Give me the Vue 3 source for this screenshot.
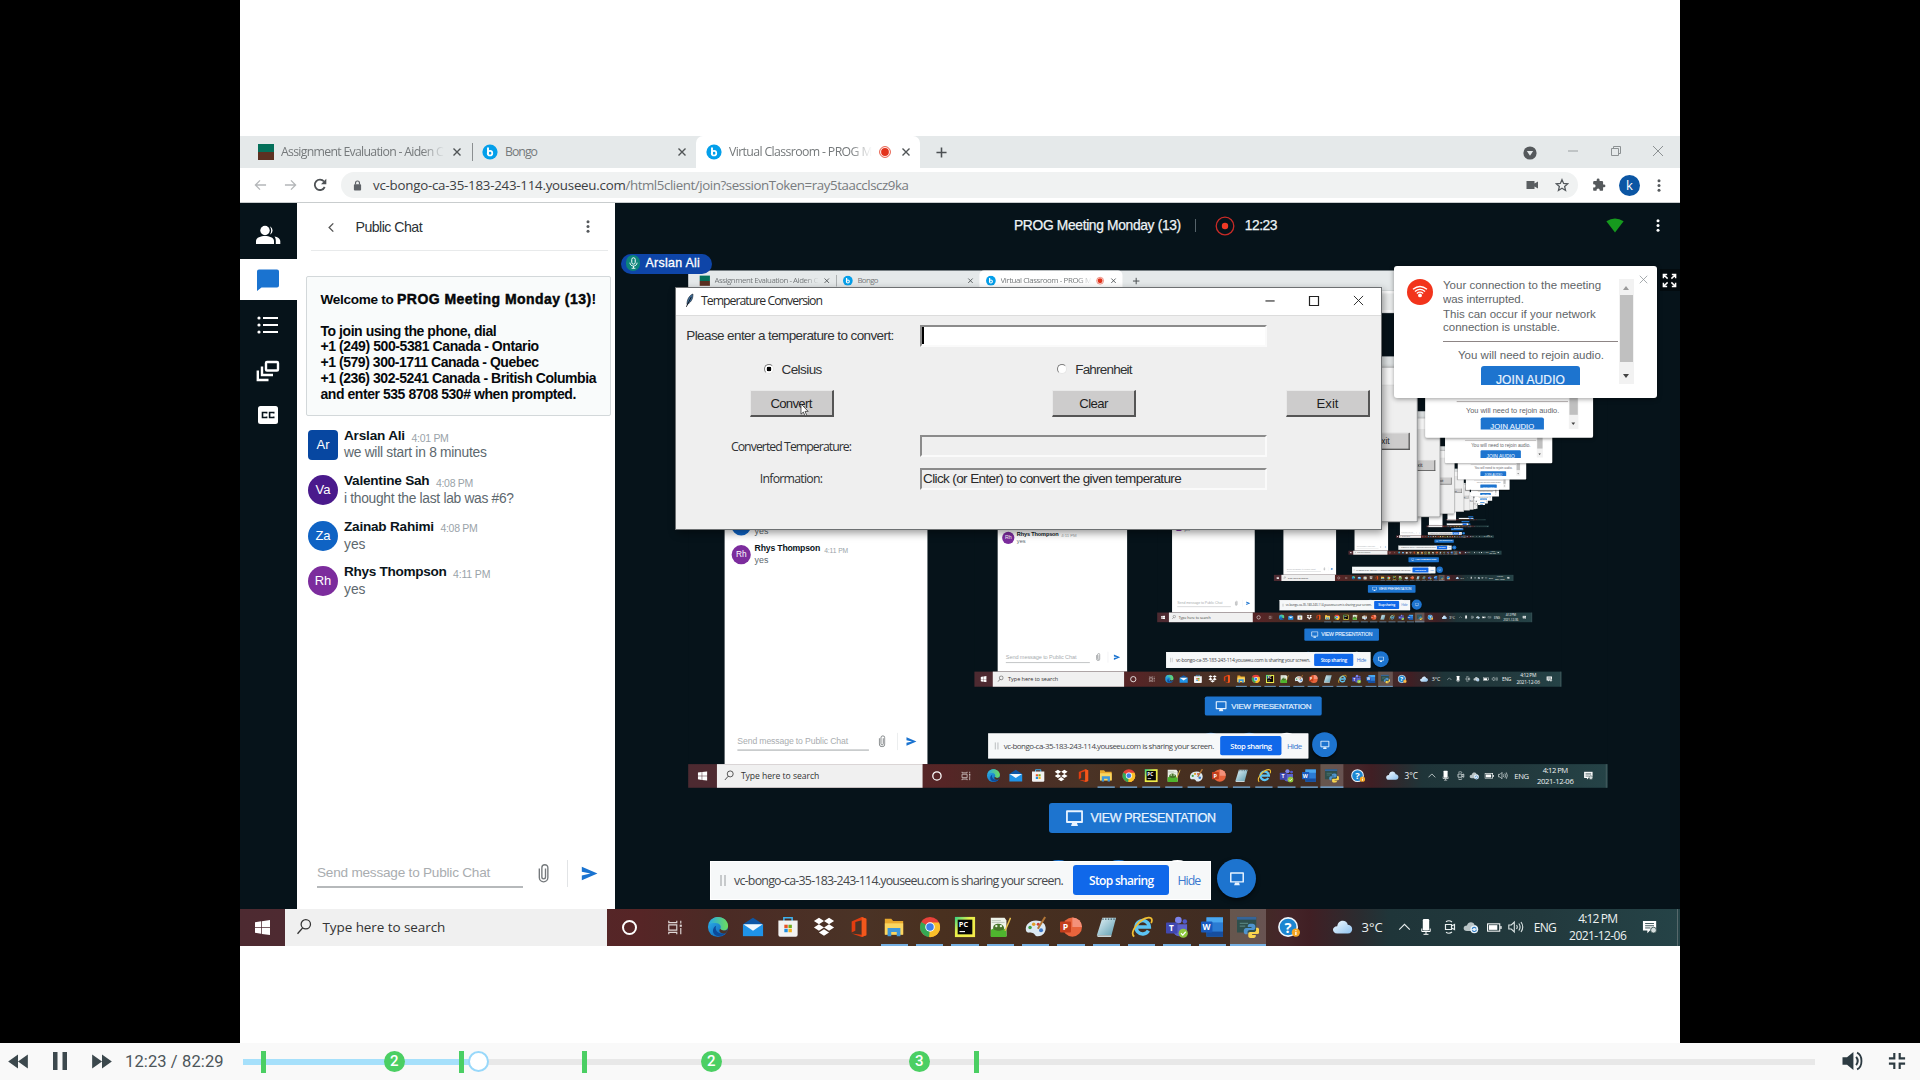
<script setup>
const SCALE = 0.6386
const STEP_X = 448.2
const STEP_Y = 134.5
const levels = Array.from({ length: 9 }, (_, i) => i)

function place(n, top) {
  const k = Math.pow(SCALE, n)
  const sum = (1 - k) / (1 - SCALE)
  return {
    transform: n ? `translate(${STEP_X * sum}px, ${STEP_Y * sum}px) scale(${k})` : 'none',
    zIndex: top ? 100 - n : n + 1,
  }
}

// Spreads or tightens the letters so that a label takes exactly the given width.
const vFit = {
  mounted(el, { value }) {
    const count = el.textContent.trim().length
    const gap = (value - el.offsetWidth) / count
    el.style.letterSpacing = gap.toFixed(3) + 'px'
  },
}

const dialIn = [
  ['To join using the phone, dial', 176],
  ['+1 (249) 500-5381 Canada - Ontario', 218],
  ['+1 (579) 300-1711 Canada - Quebec', 218],
  ['+1 (236) 302-5241 Canada - British Columbia', 276],
  ['and enter 535 8708 530# when prompted.', 255],
]
const messages = [
  { id: 'Ar', name: 'Arslan Ali', nw: 61, time: '4:01 PM', text: 'we will start in 8 minutes', tw: 143 },
  { id: 'Va', name: 'Valentine Sah', nw: 85, time: '4:08 PM', text: 'i thought the last lab was #6?', tw: 170 },
  { id: 'Za', name: 'Zainab Rahimi', nw: 90, time: '4:08 PM', text: 'yes', tw: 21 },
  { id: 'Rh', name: 'Rhys Thompson', nw: 103, time: '4:11 PM', text: 'yes', tw: 21 },
]
const apps = ['edge', 'mail', 'store', 'dropbox', 'office', 'explorer', 'chrome', 'pycharm', 'npp', 'paint', 'ppt', 'notepad', 'ie', 'teams', 'word', 'python']
const ticks = [263, 461, 584, 976]
const badges = [{ x: 394, n: 2 }, { x: 711, n: 2 }, { x: 919, n: 3 }]
</script>

<template>
  <div class="player">
    <svg class="sprite" width="0" height="0">
      <defs>
        <linearGradient id="g-edge" x1="0" y1="0" x2="1" y2="1"><stop offset="0" stop-color="#2fb8ee" /><stop offset="1" stop-color="#0a54b0" /></linearGradient>
        <linearGradient id="g-edge2" x1="0" y1="0" x2="1" y2="0"><stop offset="0" stop-color="#25a9e8" /><stop offset="1" stop-color="#6fdc5a" /></linearGradient>
        <linearGradient id="g-pc" x1="0" y1="0" x2="1" y2="1"><stop offset="0" stop-color="#2fd387" /><stop offset=".4" stop-color="#e8f04a" /><stop offset="1" stop-color="#f5e94a" /></linearGradient>
        <linearGradient id="g-cloud" x1="0" y1="0" x2="1" y2="1"><stop offset="0" stop-color="#f4fbff" /><stop offset="1" stop-color="#8fc2ef" /></linearGradient>
        <linearGradient id="g-note" x1="0" y1="0" x2="1" y2="1"><stop offset="0" stop-color="#e6f4f8" /><stop offset="1" stop-color="#5f9db0" /></linearGradient>
        <symbol id="i-bongo" viewBox="0 0 16 16"><circle cx="8" cy="8" r="7.6" fill="#049fea" /><path d="M6 3.6V10" stroke="#fff" stroke-width="1.9" /><circle cx="8" cy="9.2" r="2.3" fill="none" stroke="#fff" stroke-width="1.7" /></symbol>
        <symbol id="i-close" viewBox="0 0 10 10"><path d="M1.5 1.5l7 7M8.500 1.500l-7 7" stroke="currentColor" stroke-width="1.4" /></symbol>
        <symbol id="i-x" viewBox="0 0 12 12"><path d="M1 1l10 10M11 1L1 11" stroke="currentColor" stroke-width="1" /></symbol>
        <symbol id="i-dots" viewBox="0 0 6 16"><g fill="currentColor"><circle cx="3" cy="3" r="1.6" /><circle cx="3" cy="8" r="1.6" /><circle cx="3" cy="13" r="1.6" /></g></symbol>
        <symbol id="i-arrow" viewBox="0 0 14 12"><path d="M13 6H1.500M6.500 1L1.500 6l5 5" fill="none" stroke="currentColor" stroke-width="1.400" /></symbol>
        <symbol id="i-reload" viewBox="0 0 14 14"><path d="M11.700 9A5.200 5.200 0 1 1 11 3.500" fill="none" stroke="currentColor" stroke-width="1.800" /><path d="M13.300 .8v5.400H8z" fill="currentColor" /></symbol>
        <symbol id="i-lock" viewBox="0 0 10 12"><rect x="1" y="4.500" width="8" height="7" rx="1" fill="#5f6368" /><path d="M2.800 5V3.200a2.200 2.200 0 0 1 4.400 0V5" fill="none" stroke="#5f6368" stroke-width="1.300" /></symbol>
        <symbol id="i-cam" viewBox="0 0 14 10"><path d="M1.500 1h8v2.500L13 1.500v7L9.500 6.500V9h-8z" fill="#5a5e61" /></symbol>
        <symbol id="i-star" viewBox="0 0 24 24"><path d="M12 2.800l2.800 6.500 7 .6-5.300 4.600 1.600 6.900-6.100-3.700-6.100 3.700 1.600-6.900L2.200 9.900l7-.6z" fill="none" stroke="#555a5e" stroke-width="2.200" /></symbol>
        <symbol id="i-puzzle" viewBox="0 0 24 24"><path d="M20.500 11H19V7a2 2 0 0 0-2-2h-4V3.500a2.500 2.500 0 0 0-5 0V5H4a2 2 0 0 0-2 2v3.800h1.500a2.700 2.700 0 0 1 0 5.400H2V20a2 2 0 0 0 2 2h3.800v-1.500a2.700 2.700 0 0 1 5.400 0V22H17a2 2 0 0 0 2-2v-4h1.500a2.500 2.500 0 0 0 0-5z" fill="#55595c" /></symbol>
        <symbol id="i-users" viewBox="0 0 26 20"><g fill="#fff"><circle cx="10" cy="5.500" r="4.700" /><path d="M1 19v-3c0-3.600 5-5 9-5s9 1.400 9 5v3z" /><path d="M14.800 1.200a4.700 4.700 0 0 1 0 8.600c1.800-2.400 1.800-6.200 0-8.600zM19.500 11.600c3 .6 5.800 2 5.800 4.700V19h-4.500v-3c0-1.800-.4-3.200-1.300-4.400z" /></g></symbol>
        <symbol id="i-chat" viewBox="0 0 24 24"><path d="M3 1.500h18a2 2 0 0 1 2 2v14a2 2 0 0 1-2 2H5.500L1 23V3.500a2 2 0 0 1 2-2z" fill="#1a73d0" /></symbol>
        <symbol id="i-list" viewBox="0 0 22 18"><g fill="#fff"><circle cx="2" cy="2" r="1.600" /><circle cx="2" cy="9" r="1.600" /><circle cx="2" cy="16" r="1.600" /></g><path d="M6 2h15M6 9h15M6 16h15" stroke="#fff" stroke-width="2" /></symbol>
        <symbol id="i-layers" viewBox="0 0 24 22"><g fill="none" stroke="#fff" stroke-width="2.400"><rect x="10" y="2" width="12" height="8.500" rx="1" /><path d="M6 6.500v8.500h11M1.800 10.500V20H12.500" /></g></symbol>
        <symbol id="i-cc" viewBox="0 0 22 18"><rect x="1" y="0" width="20" height="18" rx="2.500" fill="#fff" /><path d="M9.600 7.400V6.500H5.500v5h4.100v-.9M16.700 7.400V6.500h-4.100v5h4.100v-.9" fill="none" stroke="#06131a" stroke-width="1.600" /></symbol>
        <symbol id="i-chev" viewBox="0 0 8 12"><path d="M6.500 1.500L2 6l4.500 4.500" fill="none" stroke="#555" stroke-width="1.500" /></symbol>
        <symbol id="i-clip" viewBox="0 0 12 22"><path d="M8.200 6v9.500a2 2 0 0 1-4 0V5.200a3.300 3.300 0 0 1 6.600 0V16a4.700 4.700 0 0 1-9.400 0V6" fill="none" stroke="#75797c" stroke-width="1.500" /></symbol>
        <symbol id="i-send" viewBox="0 0 18 16"><path d="M.8 .8L17.500 8 .8 15.200V10L10 8 .8 6z" fill="#1a73d0" /></symbol>
        <symbol id="i-rec" viewBox="0 0 20 20"><circle cx="10" cy="10" r="8.800" fill="none" stroke="#c92b27" stroke-width="1.300" /><circle cx="10" cy="10" r="3.200" fill="#f03a26" /></symbol>
        <symbol id="i-signal" viewBox="0 0 19 16"><path d="M.3 3.500Q9.500-2.500 18.700 3.500L9.500 15.500z" fill="#169a1e" /></symbol>
        <symbol id="i-mic" viewBox="0 0 12 16"><rect x="3.700" y="1" width="4.600" height="8.500" rx="2.300" fill="none" stroke="#fff" stroke-width="1.300" /><path d="M1.200 7.500c0 6 9.600 6 9.600 0M6 12v2.800M3.500 15h5" fill="none" stroke="#fff" stroke-width="1.200" /></symbol>
        <symbol id="i-full" viewBox="0 0 16 16"><path d="M1.500 5.500v-4h4M1.500 1.500l4.500 4.500M10.500 1.500h4v4M14.500 1.500L10 6M1.500 10.500v4h4M1.500 14.500L6 10M14.500 10.500v4h-4M14.500 14.500L10 10" fill="none" stroke="#fff" stroke-width="1.600" /></symbol>
        <symbol id="i-wifi" viewBox="0 0 26 26"><circle cx="13" cy="13" r="13" fill="#f2341c" /><g fill="none" stroke="#fff" stroke-width="1.300"><path d="M6 10.300q7-5.600 14 0M7.900 12.400q5.100-4.200 10.200 0M9.800 14.400q3.200-2.600 6.400 0" /></g><circle cx="13" cy="16.400" r="1.900" fill="#fff" /></symbol>
        <symbol id="i-monitor" viewBox="0 0 20 18"><path d="M2 1.300h16v11.400H2z" fill="none" stroke="#e8f3ff" stroke-width="1.900" stroke-linejoin="round" /><path d="M7.500 13.500h5l1.200 3.500H6.300z" fill="#e8f3ff" /></symbol>
        <symbol id="i-feather" viewBox="0 0 10 16"><path d="M8.800 .8C5 2 2 7 2.200 12.500 5.500 11 9.200 7 8.800 .8z" fill="#3d6c98" stroke="#16222e" stroke-width=".7" /><path d="M7 4L1.500 15" stroke="#10151c" stroke-width="1" /></symbol>
        <symbol id="i-cursor" viewBox="0 0 10 16"><path d="M1 1v11.800l2.700-2.500 1.900 4.500 1.900-.8-1.900-4.400h3.600z" fill="#fff" stroke="#222" stroke-width=".8" /></symbol>
        <symbol id="i-win" viewBox="0 0 16 16"><path d="M0 2.300l6.600-1v6.200H0zM7.400 1.200L16 0v7.500H7.400zM0 8.300h6.600v6.300L0 13.700zM7.400 8.300H16V16l-8.600-1.200z" fill="#fff" /></symbol>
        <symbol id="i-search" viewBox="0 0 16 20"><circle cx="10" cy="7" r="5.200" fill="none" stroke="#333" stroke-width="1.400" /><path d="M6.500 11L.8 17.500" stroke="#333" stroke-width="1.500" /></symbol>
        <symbol id="i-task" viewBox="0 0 18 16"><path d="M2 .5v2h9v-2M2 15.500v-2h9v2M2 5h9v6H2zM15.500 .5v3M15.500 8.500v7" fill="none" stroke="#ded6d5" stroke-width="1.300" /><rect x="14.300" y="4.800" width="2.400" height="2.400" fill="#ded6d5" /></symbol>
        <symbol id="i-edge" viewBox="0 0 24 24"><circle cx="12" cy="12" r="11" fill="url(#g-edge)" /><path d="M2 9C4 2.500 9 1 12 1c6 0 11 4.200 11 9.800 0 3.400-2.700 5.200-5.500 5.200-2 0-3.400-.8-3-2 1.700-3-.7-6.500-5-6.500C6.500 7.500 3.500 8 2 9z" fill="url(#g-edge2)" /><path d="M10 10.500c-2 5 2 9.500 9.500 8.500-4 4.500-13 3.500-13-3 0-2.500 1.500-4.500 3.500-5.500z" fill="#0c4a9a" /><path d="M14.500 14c1.500 2.400 5 2.400 8 .6-.4 1.800-1.500 3.400-3 4.400-5 .6-7.500-2.500-5-5z" fill="#4a3126" /></symbol>
        <symbol id="i-mail" viewBox="0 0 24 24"><path d="M1 9L12 2l11 7z" fill="#0d57a6" /><path d="M1 9h22v13H1z" fill="#1f93e8" /><path d="M1.500 9h21L12 16z" fill="#f1f8fe" /></symbol>
        <symbol id="i-store" viewBox="0 0 24 24"><path d="M7.500 6V2h9v4" fill="none" stroke="#3fb2ee" stroke-width="1.700" /><path d="M1.500 5h21v15.500a2 2 0 0 1-2 2h-17a2 2 0 0 1-2-2z" fill="#f2f2f2" /><path d="M8 9.500h3.700v3.700H8z" fill="#e65326" /><path d="M12.500 9.500h3.700v3.700h-3.700z" fill="#6eac1d" /><path d="M8 14h3.700v3.700H8z" fill="#1d8ee0" /><path d="M12.500 14h3.700v3.700h-3.700z" fill="#f4b21d" /></symbol>
        <symbol id="i-dropbox" viewBox="0 0 24 24"><path d="M6.500 2L12 5.500 6.500 9 1 5.500zM17.500 2L23 5.500 17.500 9 12 5.500zM6.500 9L12 12.500 6.500 16 1 12.500zM17.500 9l5.500 3.500-5.500 3.500-5.500-3.500zM12 14.500l5.500 3.500-5.500 3.500L6.500 18z" fill="#fff" /></symbol>
        <symbol id="i-office" viewBox="0 0 24 24"><path d="M15 1l5 2v18l-5 2-11-4 11 1.500V4.500L8 6.500V16l-4 2V6z" fill="#e23d10" /><path d="M15 1l5 2v18l-5 2z" fill="#f2581c" /></symbol>
        <symbol id="i-explorer" viewBox="0 0 24 24"><path d="M2 3h7l2 2.500h11V20H2z" fill="#e9a92d" /><path d="M2 8h20v12.500H2z" fill="#fbd660" /><path d="M5 22v-9h14v9h-4v-4.500H9V22z" fill="#3f97da" /></symbol>
        <symbol id="i-chrome" viewBox="0 0 24 24"><circle cx="12" cy="12" r="11" fill="#e8423a" /><path d="M12 12L2.500 6.500A11 11 0 0 0 12 23z" fill="#35a854" /><path d="M12 12h11A11 11 0 0 1 11 23z" fill="#fbc02a" /><path d="M12 7h9.800A11 11 0 0 1 23 12a11 11 0 0 1-11 11l4.500-8.500z" fill="#fbc02a" /><circle cx="12" cy="12" r="5.200" fill="#fff" /><circle cx="12" cy="12" r="4.100" fill="#3f7fe8" /></symbol>
        <symbol id="i-pycharm" viewBox="0 0 24 24"><rect x="1" y="1" width="22" height="22" fill="url(#g-pc)" /><rect x="4" y="4" width="16" height="16" fill="#060606" /><text x="5.300" y="12" font-family="Open Sans, sans-serif" font-weight="700" font-size="8" fill="#fff">PC</text><path d="M6 17h6" stroke="#fff" stroke-width="1.200" /></symbol>
        <symbol id="i-npp" viewBox="0 0 24 24"><path d="M2 2h15l2 3v17H2z" fill="#eef3ea" /><path d="M3 7h14M3 5h10" stroke="#b9c4b4" /><path d="M2 15q8-5 17 0v8H2z" fill="#4fb52e" /><path d="M4.500 13c0-6 11-6 12 0 0 4-12 4-12 0z" fill="#47752a" /><circle cx="8" cy="11" r="1.300" fill="#e8f3dc" /><circle cx="13" cy="11" r="1.300" fill="#e8f3dc" /><path d="M23.500 2l-6 14" stroke="#e5bf4b" stroke-width="1.600" /></symbol>
        <symbol id="i-paint" viewBox="0 0 24 24"><path d="M12 5C5 5 0 10 1 15.500 2 20 7 17 9.500 19c2.500 2 1 3 4.500 3 6 0 9-5 8.500-9.500C22 8 18 5 12 5z" fill="#dce9f2" /><circle cx="5.500" cy="12.500" r="1.900" fill="#3f9d46" /><circle cx="9.500" cy="9" r="1.900" fill="#e1a02a" /><circle cx="14.500" cy="9" r="1.700" fill="#cf3f34" /><circle cx="17.500" cy="15.500" r="2.200" fill="#3e78c8" /><path d="M22 1l-8 13" stroke="#b37636" stroke-width="2.200" /></symbol>
        <symbol id="i-ppt" viewBox="0 0 24 24"><circle cx="13.500" cy="12" r="10.500" fill="#e8643c" /><path d="M13.500 1.500A10.500 10.500 0 0 1 24 12H13.500z" fill="#f4917a" /><rect x="0" y="6" width="12" height="12" rx="1" fill="#c43e1c" /><text x="3" y="15.500" font-family="Open Sans, sans-serif" font-weight="700" font-size="9.500" fill="#fff">P</text></symbol>
        <symbol id="i-notepad" viewBox="0 0 24 24"><path d="M8 2h15l-5 19H2z" fill="url(#g-note)" /><path d="M2 21h16l-.5 1.800H3z" fill="#c9d6d9" /><path d="M8 3.500h15" stroke="#3d5964" stroke-width="1.400" stroke-dasharray="1.500 1.500" /></symbol>
        <symbol id="i-ie" viewBox="0 0 24 24"><path d="M19 16a7.300 7.300 0 1 1 1-4H6.500" fill="none" stroke="#5cc3f2" stroke-width="3.800" /><path d="M3.500 22.500C-2 18 9 3 19 1.800c5-.4 4 4 3 6" fill="none" stroke="#f1bf32" stroke-width="1.900" /></symbol>
        <symbol id="i-teams" viewBox="0 0 24 24"><circle cx="13.500" cy="4.500" r="3.600" fill="#7b83eb" /><circle cx="20.500" cy="6" r="2.500" fill="#5059c9" /><path d="M8 9h15v8a5 5 0 0 1-5 5h-4a6 6 0 0 1-6-6z" fill="#5b62ca" /><rect x="0" y="7" width="12.500" height="12" rx="1" fill="#4148b0" /><text x="3.200" y="16.300" font-family="Open Sans, sans-serif" font-weight="700" font-size="9" fill="#fff">T</text><circle cx="18.800" cy="18.800" r="5" fill="#8fc73e" /><path d="M16.300 18.800l2 2 3.200-3.600" fill="none" stroke="#fff" stroke-width="1.300" /></symbol>
        <symbol id="i-word" viewBox="0 0 24 24"><path d="M6 1.500h18v21H6z" fill="#2b7cd3" /><path d="M6 1.500h18v5.500H6z" fill="#4aa7ee" /><path d="M6 17h18v5.500H6z" fill="#164e9f" /><rect x="0" y="6" width="12.500" height="12" rx="1" fill="#185abd" /><text x="1.500" y="15.400" font-family="Open Sans, sans-serif" font-weight="700" font-size="9" fill="#fff">W</text></symbol>
        <symbol id="i-python" viewBox="0 0 24 24"><path d="M0 1h21v17H0z" fill="#2f4f4c" /><path d="M0 1h21v3H0z" fill="#35659a" /><path d="M3 8h9M3 11h6" stroke="#55807b" stroke-width="1.200" /><path d="M15.500 8.500c-4 0-3.700 2-3.700 3.500h4v1H10c-3.500 0-3.500 7 0 7h1.500v-2.500c0-1.500 1.300-2.300 2.500-2.300h4c1.300 0 2-1 2-2V11c0-2-2-2.500-4.500-2.500z" fill="#4e93cd" /><path d="M16.800 24.200c4 0 3.700-2 3.700-3.500h-4v-1h5.800c3.500 0 2.500-7 0-7h-1.500v2.500c0 1.500-1.300 2.300-2.500 2.300h-4c-1.300 0-2 1-2 2v2.200c0 2 2 2.500 4.500 2.500z" fill="#f8d44e" /></symbol>
        <symbol id="i-help" viewBox="0 0 24 24"><circle cx="11" cy="12" r="10" fill="#1c86d1" stroke="#f0f6fb" stroke-width="1.800" /><text x="7" y="18" font-family="Open Sans, sans-serif" font-weight="700" font-size="16" fill="#fff">?</text><circle cx="19.500" cy="18" r="4.500" fill="#f5a623" /><path d="M19.500 15.200v1M19.500 17.200v3.600" stroke="#fff" stroke-width="1.400" /></symbol>
        <symbol id="i-cloud" viewBox="0 0 24 18"><path d="M6 16.500C-.5 16.500-.5 8 6 8 7 0 17 0 18 6.500c7 .5 6.500 10 0 10z" fill="url(#g-cloud)" /></symbol>
        <symbol id="i-up" viewBox="0 0 14 9"><path d="M1 7.500L7 1.500l6 6" fill="none" stroke="#e8eeee" stroke-width="1.300" /></symbol>
        <symbol id="i-traymic" viewBox="0 0 10 16"><rect x="1.800" y="0" width="6.400" height="11.500" rx="1.200" fill="#fff" /><path d="M.8 9.500v3h8.400v-3M5 12.500V15M2.500 15.300h5" fill="none" stroke="#fff" stroke-width="1" /></symbol>
        <symbol id="i-meet" viewBox="0 0 14 14"><path d="M2.500 4.500h6v5h-6zM8.500 6l3-1.500v5L8.500 8M3 1.700q3-2 6 .2M3 12.300q3 2 6-.2" fill="none" stroke="#e8eeee" stroke-width="1.200" /></symbol>
        <symbol id="i-onedrive" viewBox="0 0 16 14"><path d="M4 11C-.5 11-.5 5.500 4 5.500 5 1 11 1.500 11.500 5c4 0 4 6 0 6z" fill="#b9c4c6" /><circle cx="11.300" cy="9.300" r="3.900" fill="#e9f3fa" /><path d="M9.200 9.300a2.100 2.100 0 0 1 4-.7M13.400 9.600a2.100 2.100 0 0 1-4 .7" fill="none" stroke="#2f7cc4" stroke-width="1.100" /></symbol>
        <symbol id="i-battery" viewBox="0 0 16 9"><rect x=".6" y=".6" width="13" height="7.800" fill="none" stroke="#fff" stroke-width="1.100" /><rect x="2" y="2" width="9" height="5" fill="#fff" /><rect x="14.200" y="3" width="1.400" height="3" fill="#fff" /></symbol>
        <symbol id="i-sound" viewBox="0 0 16 14"><path d="M.8 5h2.500l3-3v10l-3-3H.8zM8.500 5q1.500 2 0 4M10.800 3.500q2.600 3.500 0 7M13 2q3.500 5 0 10" fill="none" stroke="#dbe4e4" stroke-width="1.100" /></symbol>
        <symbol id="i-notif" viewBox="0 0 18 17"><path d="M1 1h15v11H9l-3 3v-3H1z" fill="#fff" /><path d="M3.500 4h10M3.500 6.500h10M3.500 9h6" stroke="#2a4549" stroke-width="1" /><circle cx="13" cy="11.500" r="3.300" fill="#d6dfdf" stroke="#25403f" stroke-width=".9" /></symbol>
      </defs>
    </svg>

    <main class="video">
      <div class="stage">
        <section v-for="n in levels" :key="'base' + n" class="screen" :style="place(n, false)">
          <header class="tabs">
            <div class="tab first">
              <i class="fav"></i><span class="tab-name wide1"><span v-fit="162" class="lbl">Assignment Evaluation - Aiden C</span></span>
              <svg class="tx"><use href="#i-close" /></svg>
            </div>
            <div class="tab second">
              <svg class="bongo"><use href="#i-bongo" /></svg><span class="tab-name wide2"><span v-fit="32" class="lbl">Bongo</span></span>
              <svg class="tx"><use href="#i-close" /></svg>
            </div>
            <div class="tab live">
              <svg class="bongo"><use href="#i-bongo" /></svg><span class="tab-name wide3"><span v-fit="149" class="lbl">Virtual Classroom - PROG Me</span></span>
              <svg class="onair" viewBox="0 0 12 12"><circle cx="6" cy="6" r="5.400" fill="none" stroke="#e3452f" stroke-width=".9" /><circle cx="6" cy="6" r="3.900" fill="#e3331c" /></svg>
              <svg class="tx"><use href="#i-close" /></svg>
            </div>
            <svg class="plus" viewBox="0 0 12 12"><path d="M6 .5v11M.5 6h11" stroke="#4c5053" stroke-width="1.700" /></svg>
            <div class="win-ctl">
              <svg width="14" height="14" viewBox="0 0 14 14"><circle cx="7" cy="7" r="6.600" fill="#55595c" /><path d="M3.800 5h6.400L7 9.700z" fill="#e5e9ea" /></svg>
              <svg width="12" height="12" viewBox="0 0 12 12"><path d="M1 6h10" stroke="#9a9fa1" /></svg>
              <svg width="12" height="12" viewBox="0 0 12 12"><path d="M1.500 3.500h7v7h-7zM3.500 3.500v-2h7v7h-2" fill="none" stroke="#8c9193" /></svg>
              <svg width="12" height="12" class="grey"><use href="#i-x" /></svg>
            </div>
          </header>
          <div class="toolbar">
            <svg class="nav dim"><use href="#i-arrow" /></svg>
            <svg class="nav dim flip"><use href="#i-arrow" /></svg>
            <svg class="reload"><use href="#i-reload" /></svg>
            <div class="omni">
              <svg class="lock"><use href="#i-lock" /></svg>
              <span class="url"><span v-fit="252" class="lbl host">vc-bongo-ca-35-183-243-114.youseeu.com</span><span v-fit="283" class="lbl">/html5client/join?sessionToken=ray5taacclscz9ka</span></span>
              <svg class="cam"><use href="#i-cam" /></svg>
              <svg class="star"><use href="#i-star" /></svg>
            </div>
            <svg class="puzzle"><use href="#i-puzzle" /></svg>
            <b class="me">k</b>
            <svg class="kebab"><use href="#i-dots" /></svg>
          </div>

          <div class="page">
            <nav class="rail">
              <span class="r1"><svg width="26" height="20"><use href="#i-users" /></svg></span>
              <span class="r2"><svg width="24" height="24"><use href="#i-chat" /></svg></span>
              <span class="r3"><svg width="22" height="18"><use href="#i-list" /></svg></span>
              <span class="r4"><svg width="24" height="22"><use href="#i-layers" /></svg></span>
              <span class="r5"><svg width="22" height="18"><use href="#i-cc" /></svg></span>
            </nav>
            <aside class="chat">
              <div class="chat-head">
                <svg class="chev"><use href="#i-chev" /></svg>
                <span v-fit="67" class="lbl">Public Chat</span>
                <svg class="kebab"><use href="#i-dots" /></svg>
              </div>
              <div class="welcome">
                <p class="hello"><span v-fit="77" class="lbl welcome-to">Welcome to </span><b v-fit="195" class="lbl">PROG Meeting Monday (13)</b>!</p>
                <p v-for="d in dialIn" :key="d[0]"><span v-fit="d[1]" class="lbl">{{ d[0] }}</span></p>
              </div>
              <div class="msgs">
                <div v-for="m in messages" :key="m.id" class="msg">
                  <div class="ava" :class="m.id">{{ m.id }}</div>
                  <div class="body">
                    <div class="who"><b v-fit="m.nw" class="lbl">{{ m.name }}</b><span v-fit="37" class="lbl time">{{ m.time }}</span></div>
                    <div class="said"><span v-fit="m.tw" class="lbl">{{ m.text }}</span></div>
                  </div>
                </div>
              </div>
              <div class="compose">
                <div class="field"><span v-fit="173" class="lbl">Send message to Public Chat</span></div>
                <svg class="clip"><use href="#i-clip" /></svg>
                <i class="bar"></i>
                <svg class="send"><use href="#i-send" /></svg>
              </div>
            </aside>
            <div class="room">
              <div class="room-head">
                <span v-fit="167" class="lbl">PROG Meeting Monday (13)</span><i></i>
                <svg class="rec"><use href="#i-rec" /></svg>
                <span v-fit="32.500" class="lbl">12:23</span>
                <svg class="signal"><use href="#i-signal" /></svg>
                <svg class="kebab"><use href="#i-dots" /></svg>
              </div>
              <div class="room-foot">
                <div class="present"><svg><use href="#i-monitor" /></svg><span v-fit="125.500" class="lbl">VIEW PRESENTATION</span></div>
              </div>
            </div>
          </div>

          <footer class="taskbar">
            <div class="start"><svg><use href="#i-win" /></svg></div>
            <div class="find"><svg><use href="#i-search" /></svg><span v-fit="122.500" class="lbl">Type here to search</span></div>
            <div class="cortana"><i></i></div>
            <div class="tview"><svg><use href="#i-task" /></svg></div>
            <div v-for="(a, i) in apps" :key="a" class="app" :class="{ open: i > 4, front: a === 'python' }"><svg><use :href="'#i-' + a" /></svg></div>
            <div class="app helpapp"><svg><use href="#i-help" /></svg></div>
            <div class="tray">
              <svg class="t-cloud"><use href="#i-cloud" /></svg>
              <span v-fit="21" class="lbl t-temp">3°C</span>
              <svg class="t-up"><use href="#i-up" /></svg>
              <svg class="t-mic"><use href="#i-traymic" /></svg>
              <svg class="t-meet"><use href="#i-meet" /></svg>
              <svg class="t-od"><use href="#i-onedrive" /></svg>
              <svg class="t-bat"><use href="#i-battery" /></svg>
              <svg class="t-snd"><use href="#i-sound" /></svg>
              <span v-fit="22" class="lbl t-eng">ENG</span>
              <div class="t-clock"><div><span v-fit="39" class="lbl">4:12 PM</span></div><div><span v-fit="57.500" class="lbl">2021-12-06</span></div></div>
              <svg class="t-not"><use href="#i-notif" /></svg>
              <i class="t-end"></i>
            </div>
          </footer>
        </section>

        <section v-for="n in levels" :key="'top' + n" class="screen over" :style="place(n, true)">
          <div class="pill"><i><svg><use href="#i-mic" /></svg></i><span v-fit="55" class="lbl">Arslan Ali</span></div>
          <div class="fs"><svg><use href="#i-full" /></svg></div>
          <div class="circ c1"></div><div class="circ c2"></div><div class="circ c3"></div>
          <div class="circ c4"><svg><use href="#i-monitor" /></svg></div>
          <div class="share">
            <i></i><i></i><span v-fit="328.500" class="lbl">vc-bongo-ca-35-183-243-114.youseeu.com is sharing your screen.</span>
            <div class="stop"><span v-fit="64" class="lbl">Stop sharing</span></div>
            <span v-fit="23" class="lbl hide">Hide</span>
          </div>
          <div class="dialog">
            <div class="d-title">
              <svg class="feather"><use href="#i-feather" /></svg><span v-fit="121" class="lbl">Temperature Conversion</span>
              <svg class="d-min" viewBox="0 0 12 12"><path d="M.5 6.500h10" stroke="#222" stroke-width="1.200" /></svg>
              <svg class="d-max" viewBox="0 0 12 12"><path d="M1.500 1.500h9v9h-9z" fill="none" stroke="#222" stroke-width="1.200" /></svg>
              <svg class="d-x"><use href="#i-x" /></svg>
            </div>
            <div class="d-grid">
              <div class="col-a">
                <div class="row h1"><span v-fit="207" class="lbl">Please enter a temperature to convert:</span></div>
                <div class="row h2"><i class="radio on"></i><span v-fit="40" class="lbl">Celsius</span></div>
                <div class="row h3"><div class="btn"><span v-fit="41" class="lbl">Convert</span></div></div>
                <div class="row h4 sys"><span v-fit="120" class="lbl">Converted Temperature:</span></div>
                <div class="row h5 sys"><span v-fit="62" class="lbl">Information:</span></div>
              </div>
              <div class="col-b">
                <div class="row h1"><div class="entry edit"><i></i></div></div>
                <div class="row h2 fahr"><i class="radio"></i><span v-fit="57" class="lbl">Fahrenheit</span></div>
                <div class="row h3"><div class="btn"><span v-fit="29" class="lbl">Clear</span></div></div>
                <div class="row h4"><div class="entry"></div></div>
                <div class="row h5"><div class="entry"><span v-fit="258" class="lbl">Click (or Enter) to convert the given temperature</span></div></div>
              </div>
              <div class="col-c">
                <div class="row h3"><div class="btn"><span v-fit="22" class="lbl">Exit</span></div></div>
              </div>
            </div>
            <svg v-if="n === 0" class="cursor"><use href="#i-cursor" /></svg>
          </div>
          <div class="toast">
            <svg class="warn"><use href="#i-wifi" /></svg>
            <div class="t-body">
              <p class="l1"><span v-fit="158" class="lbl">Your connection to the meeting</span></p>
              <p class="l2"><span v-fit="81" class="lbl">was interrupted.</span></p>
              <p class="l3"><span v-fit="153" class="lbl">This can occur if your network</span></p>
              <p class="l4"><span v-fit="117" class="lbl">connection is unstable.</span></p>
              <hr />
              <p class="rejoin"><span v-fit="146" class="lbl">You will need to rejoin audio.</span></p>
              <div class="join"><span v-fit="69" class="lbl">JOIN AUDIO</span></div>
            </div>
            <div class="scroll"><i class="up"></i><i class="thumb"></i><i class="down"></i></div>
            <svg class="t-x"><use href="#i-x" /></svg>
          </div>
        </section>
      </div>
    </main>

    <div class="controls">
      <svg class="c-rew" viewBox="0 0 22 16"><path d="M11 .5v15L.5 8zM21.500 .5v15L11 8z" fill="#3c484d" /></svg>
      <svg class="c-pause" viewBox="0 0 16 18"><path d="M1 0h4.500v18H1zM10.500 0H15v18h-4.500z" fill="#3c484d" /></svg>
      <svg class="c-ff" viewBox="0 0 22 16"><path d="M.5 .5v15L11 8zM11 .5v15L21.500 8z" fill="#3c484d" /></svg>
      <span v-fit="98.500" class="lbl clock">12:23 / 82:29</span>
      <div class="track">
        <div class="done"></div>
        <i v-for="t in ticks" :key="t" class="tick" :style="{ left: t - 243 + 'px' }"></i>
        <b v-for="b in badges" :key="b.x" class="badge" :style="{ left: b.x - 243 + 'px' }">{{ b.n }}</b>
        <i class="knob"></i>
      </div>
      <svg class="c-vol" viewBox="0 0 24 22"><path d="M1 7h5l7-6v20l-7-6H1z" fill="#2d3b42" /><path d="M16 6.500q3.500 4.500 0 9" fill="none" stroke="#2d3b42" stroke-width="2.200" /><path d="M17 1.800c6.500 3 6.500 15.400 0 18.400" fill="none" stroke="#2d3b42" stroke-width="2" /></svg>
      <svg class="c-fs" viewBox="0 0 20 20"><path d="M1 7h6V1M19 7h-6V1M1 13h6v6M19 13h-6v6" fill="none" stroke="#2d3b42" stroke-width="2.400" /></svg>
    </div>
  </div>
</template>

<style>
html, body { margin: 0; background: #000; overflow: hidden; }
</style>

<style scoped>
* { box-sizing: border-box; }
p { margin: 0; }
svg { display: block; flex: none; overflow: visible; }
i { display: block; flex: none; }
.sprite { position: absolute; overflow: hidden; }
.lbl { display: inline-block; white-space: nowrap; flex: none; }
.player { width: 1920px; height: 1080px; display: flex; flex-direction: column; background: #000; overflow: hidden; }
.video { width: 1440px; height: 1043px; margin: 0 auto; background: #fff; padding-top: 136px; }
.stage { width: 1440px; height: 810px; position: relative; overflow: hidden; background: #06131a; }
.screen { position: absolute; left: 0; top: 0; width: 1440px; height: 810px; transform-origin: 0 0; display: flex; flex-direction: column; font-family: "Liberation Sans", Arial, sans-serif; }
.over { pointer-events: none; }

/* browser */
.tabs { height: 32px; background: #e5e9ea; display: flex; align-items: center; font: 12.300px "Open Sans", sans-serif; color: #75797b; flex: none; }
.tab { height: 32px; display: flex; align-items: center; flex: none; padding-bottom: 1px; }
.first { width: 233px; padding-left: 18px; position: relative; }
.first::after { content: ""; position: absolute; right: 0; top: 7px; width: 1px; height: 18px; background: #8b8f91; }
.second { width: 223px; padding-left: 9px; }
.live { width: 224px; padding-left: 10px; background: #fff; border-radius: 7px 7px 0 0; }
.fav { width: 16px; height: 16px; background: linear-gradient(#04705a 50%, #5c3122 50%); }
.bongo { width: 16px; height: 16px; }
.tab-name { overflow: hidden; white-space: nowrap; line-height: 20px; }
.wide1 { width: 164px; margin-left: 7px; -webkit-mask-image: linear-gradient(90deg, #000 86%, transparent); }
.wide2 { width: 165px; margin-left: 7px; }
.wide3 { width: 143px; margin-left: 7px; -webkit-mask-image: linear-gradient(90deg, #000 85%, transparent); }
.tx { width: 10px; height: 10px; color: #505456; margin-left: 7px; margin-top: 1px; }
.onair { width: 12px; height: 12px; margin-left: 7px; }
.live .tx { margin-left: 9.500px; }
.plus { width: 11px; height: 11px; margin-left: 15.500px; }
.win-ctl { margin-left: auto; display: flex; align-items: center; gap: 30px; padding-right: 16px; margin-top: -3px; }
.win-ctl svg:first-child { margin: 4px 0 0 0; }
.win-ctl svg:nth-child(2) { margin-right: 1px; }
.grey { color: #8c9193; }
.toolbar { height: 35px; background: #fff; border-bottom: 1px solid #c9cdce; display: flex; align-items: center; flex: none; font-family: "Open Sans", sans-serif; }
.nav { width: 13px; height: 12px; margin-left: 14px; color: #b4b7b9; }
.flip { transform: scaleX(-1); margin-left: 17px; }
.reload { width: 14px; height: 14px; margin-left: 16px; color: #4e5255; }
.omni { width: 1237px; height: 26px; border-radius: 13px; background: #f0f2f2; margin-left: 14px; display: flex; align-items: center; }
.lock { width: 9px; height: 11px; margin-left: 12px; }
.url { margin-left: 11px; font-size: 13.300px; color: #787c7f; line-height: 20px; display: flex; margin-right: auto; }
.host { color: #3c4043; }
.cam { width: 14px; height: 10px; }
.star { width: 14px; height: 14px; margin: 0 9px 0 16.500px; }
.puzzle { width: 14px; height: 14px; margin-left: 14px; }
.me { width: 21px; height: 21px; border-radius: 50%; background: #0b56a4; color: #fff; font-weight: 400; font-size: 13px; line-height: 20px; text-align: center; margin-left: 13px; }
.kebab { width: 6px; height: 15px; color: #55595c; }
.toolbar .kebab { margin-left: 16px; }

/* meeting page */
.page { height: 705.500px; display: flex; flex: none; }
.rail { width: 56.500px; background: #06131a; display: flex; flex-direction: column; }
.rail span { display: flex; align-items: center; justify-content: center; padding-right: 1px; }
.r1 { height: 56px; padding-top: 8px; }
.r2 { height: 41px; background: #fff; }
.r3 { height: 49px; }
.r4 { height: 43px; }
.r5 { height: 46px; }
.chat { width: 318.500px; background: #fff; display: flex; flex-direction: column; }
.chat-head { height: 48px; margin: 0 7px 0 14px; border-bottom: 1px solid #e8eaeb; display: flex; align-items: center; font-size: 14.200px; color: #2c3236; }
.chev { width: 8px; height: 11px; margin: 1px 21px 0 16px; }
.chat-head .kebab { margin-left: auto; margin-right: 17px; }
.welcome { width: 305.500px; height: 140px; margin: 25px 0 0 9px; border: 1px solid #d3d8da; border-radius: 2px; background: #f9fbfb; padding: 15px 0 0 14px; font-size: 14px; font-weight: 700; color: #06090c; line-height: 15.700px; flex: none; }
.hello { margin-bottom: 16px; font-weight: 700; white-space: nowrap; }
.hello b { -webkit-text-stroke: .45px #000; }
.hello .welcome-to { white-space: pre; font-size: 13.600px; }
.msgs { margin: 14px 0 0 12px; display: flex; flex-direction: column; }
.msg { height: 45.400px; display: flex; }
.ava { width: 30px; height: 30px; border-radius: 50%; color: #fff; font-size: 13px; line-height: 30px; text-align: center; margin-left: -.5px; }
.Ar { background: #0747a1; border-radius: 4px; }
.Va { background: #4a1a8c; }
.Za { background: #0f63c4; }
.Rh { background: #7c2c9d; }
.body { margin-left: 6px; padding-top: 0; }
.who { height: 14px; display: flex; align-items: center; font-size: 13.600px; line-height: 14px; color: #0a141a; margin-top: -1px; }
.time { font-size: 10.500px; color: #9aa3a9; margin-left: 6.500px; margin-top: 3px; }
.said { font-size: 13.800px; line-height: 20px; color: #5d686e; }
.msg + .msg .said { padding-top: 1px; }
.compose { margin-top: auto; height: 56px; display: flex; align-items: flex-start; padding: 6px 0 0 20.500px; flex: none; }
.field { width: 206px; height: 29.500px; border-bottom: 2px solid #b6b9bb; font-size: 13.600px; color: #a9adb0; line-height: 28px; }
.clip { width: 11px; height: 20px; margin: 4px 0 0 15px; }
.bar { width: 1px; height: 27px; background: #e2e4e6; margin: 1px 0 0 17.500px; }
.send { width: 17px; height: 15px; margin: 7px 0 0 13.500px; }
.room { width: 1065px; background: #06131a; display: flex; flex-direction: column; justify-content: space-between; }
.room-head { height: 44px; display: flex; align-items: center; padding-left: 399px; color: #eef3f6; font-size: 13.800px; -webkit-text-stroke: .25px #eef3f6; }
.room-head i { width: 1px; height: 13px; background: #56636a; margin: 0 19px 0 14px; }
.rec { width: 20px; height: 20px; margin-right: 10px; margin-top: 2px; }
.signal { width: 18px; height: 15px; margin: 1px 0 0 329px; }
.room-head .kebab { margin-left: 31px; color: #fff; }
.room-foot { height: 105.500px; padding-left: 434px; }
.present { width: 183px; height: 30px; border-radius: 3px; background: #1d74cf; display: flex; align-items: center; padding-left: 15.500px; color: #e8f3ff; font-size: 12.500px; -webkit-text-stroke: .25px #e8f3ff; }
.present svg { width: 19px; height: 17px; margin-right: 7px; }

/* taskbar */
.taskbar { height: 37.500px; flex: none; display: flex; background: linear-gradient(90deg, #4d2a31 0, #4e2a31 45px, #562526 400px, #4b2a25 470px, #4a3326 620px, #49301f 700px, #402c22 1000px, #45262a 1045px, #401f24 1070px, #2a2c30 1120px, #1f3539 1150px, #22393d 1300px, #254347 1440px); font-family: "Open Sans", sans-serif; color: #eef2f2; }
.start { width: 45px; display: flex; align-items: center; justify-content: center; }
.start svg { width: 15px; height: 15px; }
.find { width: 322px; background: #f0f0f0; color: #333; display: flex; align-items: center; font-size: 13.500px; padding-left: 11px; }
.find svg { width: 16px; height: 18px; margin-right: 10.500px; }
.cortana { width: 45px; display: flex; align-items: center; justify-content: center; }
.cortana i { width: 15px; height: 15px; border-radius: 50%; border: 2px solid #fff; }
.tview { width: 48px; display: flex; align-items: center; padding-left: 14.500px; }
.tview svg { width: 16px; height: 15px; }
.app { width: 35.350px; flex: none; display: flex; align-items: center; justify-content: center; position: relative; }
.app svg { width: 22px; height: 22px; }
.open::after { content: ""; position: absolute; left: 4px; right: 4px; bottom: 0; height: 2px; background: #76b0e2; }
.front { background: rgba(255, 255, 255, .2); }
.front::after { left: 0; right: 0; }
.helpapp { width: 46px; }
.tray { display: flex; align-items: center; font-size: 12px; }
.t-cloud { width: 21px; height: 16px; margin-left: 20.500px; }
.t-temp { margin-left: 8.500px; font-size: 13px; }
.t-up { width: 13px; height: 8px; margin-left: 15px; }
.t-mic { width: 10px; height: 16px; margin-left: 10.500px; }
.t-meet { width: 14px; height: 14px; margin-left: 12px; }
.t-od { width: 16px; height: 14px; margin-left: 6px; }
.t-bat { width: 15px; height: 9px; margin-left: 7.500px; }
.t-snd { width: 16px; height: 14px; margin-left: 6.500px; }
.t-eng { margin-left: 9.500px; }
.t-clock { width: 58px; margin-left: 12.500px; line-height: 17.500px; text-align: center; font-size: 12px; flex: none; }
.t-not { width: 16px; height: 15px; margin-left: 15.500px; }
.t-end { width: 1px; height: 37.500px; background: #57696c; margin-left: 19px; }

/* floating pieces */
.pill { position: absolute; left: 381px; top: 117.500px; width: 91px; height: 20px; border-radius: 10px; background: #0e45a8; display: flex; align-items: center; padding: 0 0 1px 5px; color: #fff; font-size: 12.400px; -webkit-text-stroke: .3px #fff; }
.pill i { width: 14px; height: 16px; border-radius: 7px; background: #0c857a; display: flex; align-items: center; justify-content: center; margin-right: 5.500px; }
.pill svg { width: 9px; height: 12px; }
.fs { position: absolute; left: 1420px; top: 133px; width: 20px; height: 22px; background: #030b0f; display: flex; align-items: center; padding-left: 2px; }
.fs svg { width: 15px; height: 15px; }
.circ { position: absolute; top: 723.500px; width: 39px; height: 39px; border-radius: 50%; background: #1d74cf; }
.c1 { left: 799px; }
.c2 { left: 859px; }
.c3 { left: 918px; background: #fff; }
.c4 { left: 977px; top: 723px; display: flex; align-items: center; justify-content: center; box-shadow: 0 2px 4px rgba(0, 0, 0, .6); }
.c4 svg { width: 16px; height: 14px; }
.share { position: absolute; left: 470px; top: 724.500px; width: 501px; height: 39.500px; background: #f6f8f9; display: flex; align-items: center; padding-left: 9px; font: 12.400px "Open Sans", sans-serif; color: #46494c; border: 1px solid #fff; }
.share > i { width: 2px; height: 11px; background: #c7cacc; margin-right: 2px; }
.share > i + i { margin-right: 8px; }
.stop { width: 95.500px; height: 30px; background: #1068ea; border-radius: 3px; color: #fff; font-weight: 600; font-size: 12px; display: flex; align-items: center; justify-content: center; margin: 0 8.500px 0 10.500px; flex: none; }
.hide { color: #3b78d0; }

.dialog { position: absolute; left: 434.500px; top: 150.500px; width: 707px; height: 243px; background: #efefef; border: 1px solid #6d7072; box-shadow: 2px 3px 8px rgba(0, 0, 0, .4); color: #303234; font-size: 13.500px; }
.d-title { height: 28px; background: #fff; border-bottom: 1px solid #dcdcdc; display: flex; align-items: center; font: 12.300px "Open Sans", sans-serif; color: #2c2c2c; padding-bottom: 1px; }
.feather { width: 9px; height: 15px; margin: 0 7.500px 0 9px; }
.d-min { width: 11px; height: 11px; margin-left: 443px; }
.d-max { width: 12px; height: 12px; margin-left: 32px; }
.d-x { width: 11px; height: 11px; margin-left: 32.500px; color: #222; }
.d-grid { display: flex; }
.col-a { width: 230px; }
.col-b { width: 376px; }
.col-c { width: 99px; padding-top: 71px; }
.row { display: flex; align-items: center; justify-content: center; }
.h1 { height: 40px; }
.h2 { height: 31px; padding-bottom: 4px; }
.h3 { height: 34px; }
.h4 { height: 51px; }
.h5 { height: 14px; }
.col-a .h2 { justify-content: flex-start; padding-left: 88px; }
.col-a .h1 { padding-right: 1px; }
.col-a .h3 { padding-left: 2px; }
.fahr { padding-left: 2px; padding-right: 0; }
.sys { font: 12.300px "Open Sans", sans-serif; padding-left: 1px; }
.radio { width: 10px; height: 10px; border-radius: 50%; background: #fff; border: 1px solid #7b7b7b; border-right-color: #e6e6e6; border-bottom-color: #e6e6e6; margin-right: 8px; }
.radio.on { background: radial-gradient(#000 0 2.200px, #fff 2.600px); }
.btn { width: 84px; height: 27px; background: #cdcccc; border: 1px solid #e9e9e9; border-right: 2px solid #555; border-bottom: 2px solid #555; display: flex; align-items: center; justify-content: center; color: #1f1f1f; font-size: 13.200px; flex: none; }
.col-b .btn { margin-left: 1px; }
.col-c .btn { margin-right: 6px; }
.entry { width: 347px; height: 22px; border: 2px solid #8b8b8b; border-right-color: #fafafa; border-bottom-color: #fafafa; display: flex; align-items: center; flex: none; color: #2a2a2a; padding-left: 1px; }
.col-b .entry { margin-left: 0; }
.edit { background: #fff; padding-left: 0; }
.edit i { width: 2px; height: 17px; background: #000; }
.cursor { position: absolute; left: 124.500px; top: 115.500px; width: 9px; height: 14px; }

.toast { position: absolute; left: 1154px; top: 129.500px; width: 262.500px; height: 132px; background: #fff; border-radius: 3px; display: flex; box-shadow: 0 1px 5px rgba(0, 0, 0, .4); padding: 13.500px 0 0 13px; }
.warn { width: 26px; height: 26px; }
.t-body { width: 175px; height: 105.500px; overflow: hidden; margin-left: 10px; color: #5f6568; font-size: 11.500px; display: flex; flex-direction: column; flex: none; }
.t-body p { line-height: 13.500px; height: 13.500px; }
.t-body .l3 { margin-top: 1.500px; }
.t-body hr { margin: 6px 0 0; border: 0; height: 1px; width: 100%; background: #8d8585; flex: none; }
.t-body .rejoin { margin: 7px 0 4px; padding-left: 15px; }
.join { margin-left: 38px; width: 99px; height: 30px; flex: none; border-radius: 3px; background: #1d74cf; color: #e8f3ff; font-size: 12px; text-align: center; line-height: 29px; -webkit-text-stroke: .2px #e8f3ff; }
.scroll { width: 14.500px; height: 105px; background: #f2f2f2; display: flex; flex-direction: column; align-items: center; margin-left: 1px; }
.scroll .up { border: 3.500px solid transparent; border-top: 0; border-bottom: 4px solid #9a9a9a; margin: 6.500px 0 5px; }
.scroll .thumb { width: 13px; height: 67px; background: #c0c0c0; }
.scroll .down { border: 3.500px solid transparent; border-bottom: 0; border-top: 4px solid #444; margin-top: 12.500px; }
.t-x { width: 9px; height: 9px; margin: -4px 0 0 5px; color: #8a9094; }

/* player controls */
.controls { height: 37px; background: #f9f9f9; display: flex; align-items: center; position: relative; }
.c-rew { width: 22px; height: 15px; margin: -1px 0 0 7px; }
.c-pause { width: 16px; height: 18px; margin: -1px 0 0 23px; }
.c-ff { width: 22px; height: 15px; margin: -1px 0 0 23px; }
.clock { font: 16.500px Roboto, sans-serif; color: #4c5559; margin: -1px 0 0 12px; }
.track { position: relative; width: 1572px; height: 6px; background: #e8e8e8; margin: 0 0 0 19.500px; flex: none; }
.done { width: 236px; height: 6px; background: #a6e0fb; }
.tick { position: absolute; top: -8px; width: 5px; height: 22px; margin-left: -2.500px; background: #4bcf63; }
.badge { position: absolute; top: -7.500px; width: 21px; height: 21px; border-radius: 50%; margin-left: -10.500px; background: #4bcf63; color: #fff; font: 500 15px/21px Roboto, sans-serif; text-align: center; }
.knob { position: absolute; left: 225px; top: -7.500px; width: 21px; height: 21px; border-radius: 50%; background: #fff; border: 2.500px solid #98d8fa; }
.c-vol { width: 23px; height: 20px; margin: -1px 0 0 26px; }
.c-fs { width: 18px; height: 18px; margin: -1px 0 0 24px; }
</style>
